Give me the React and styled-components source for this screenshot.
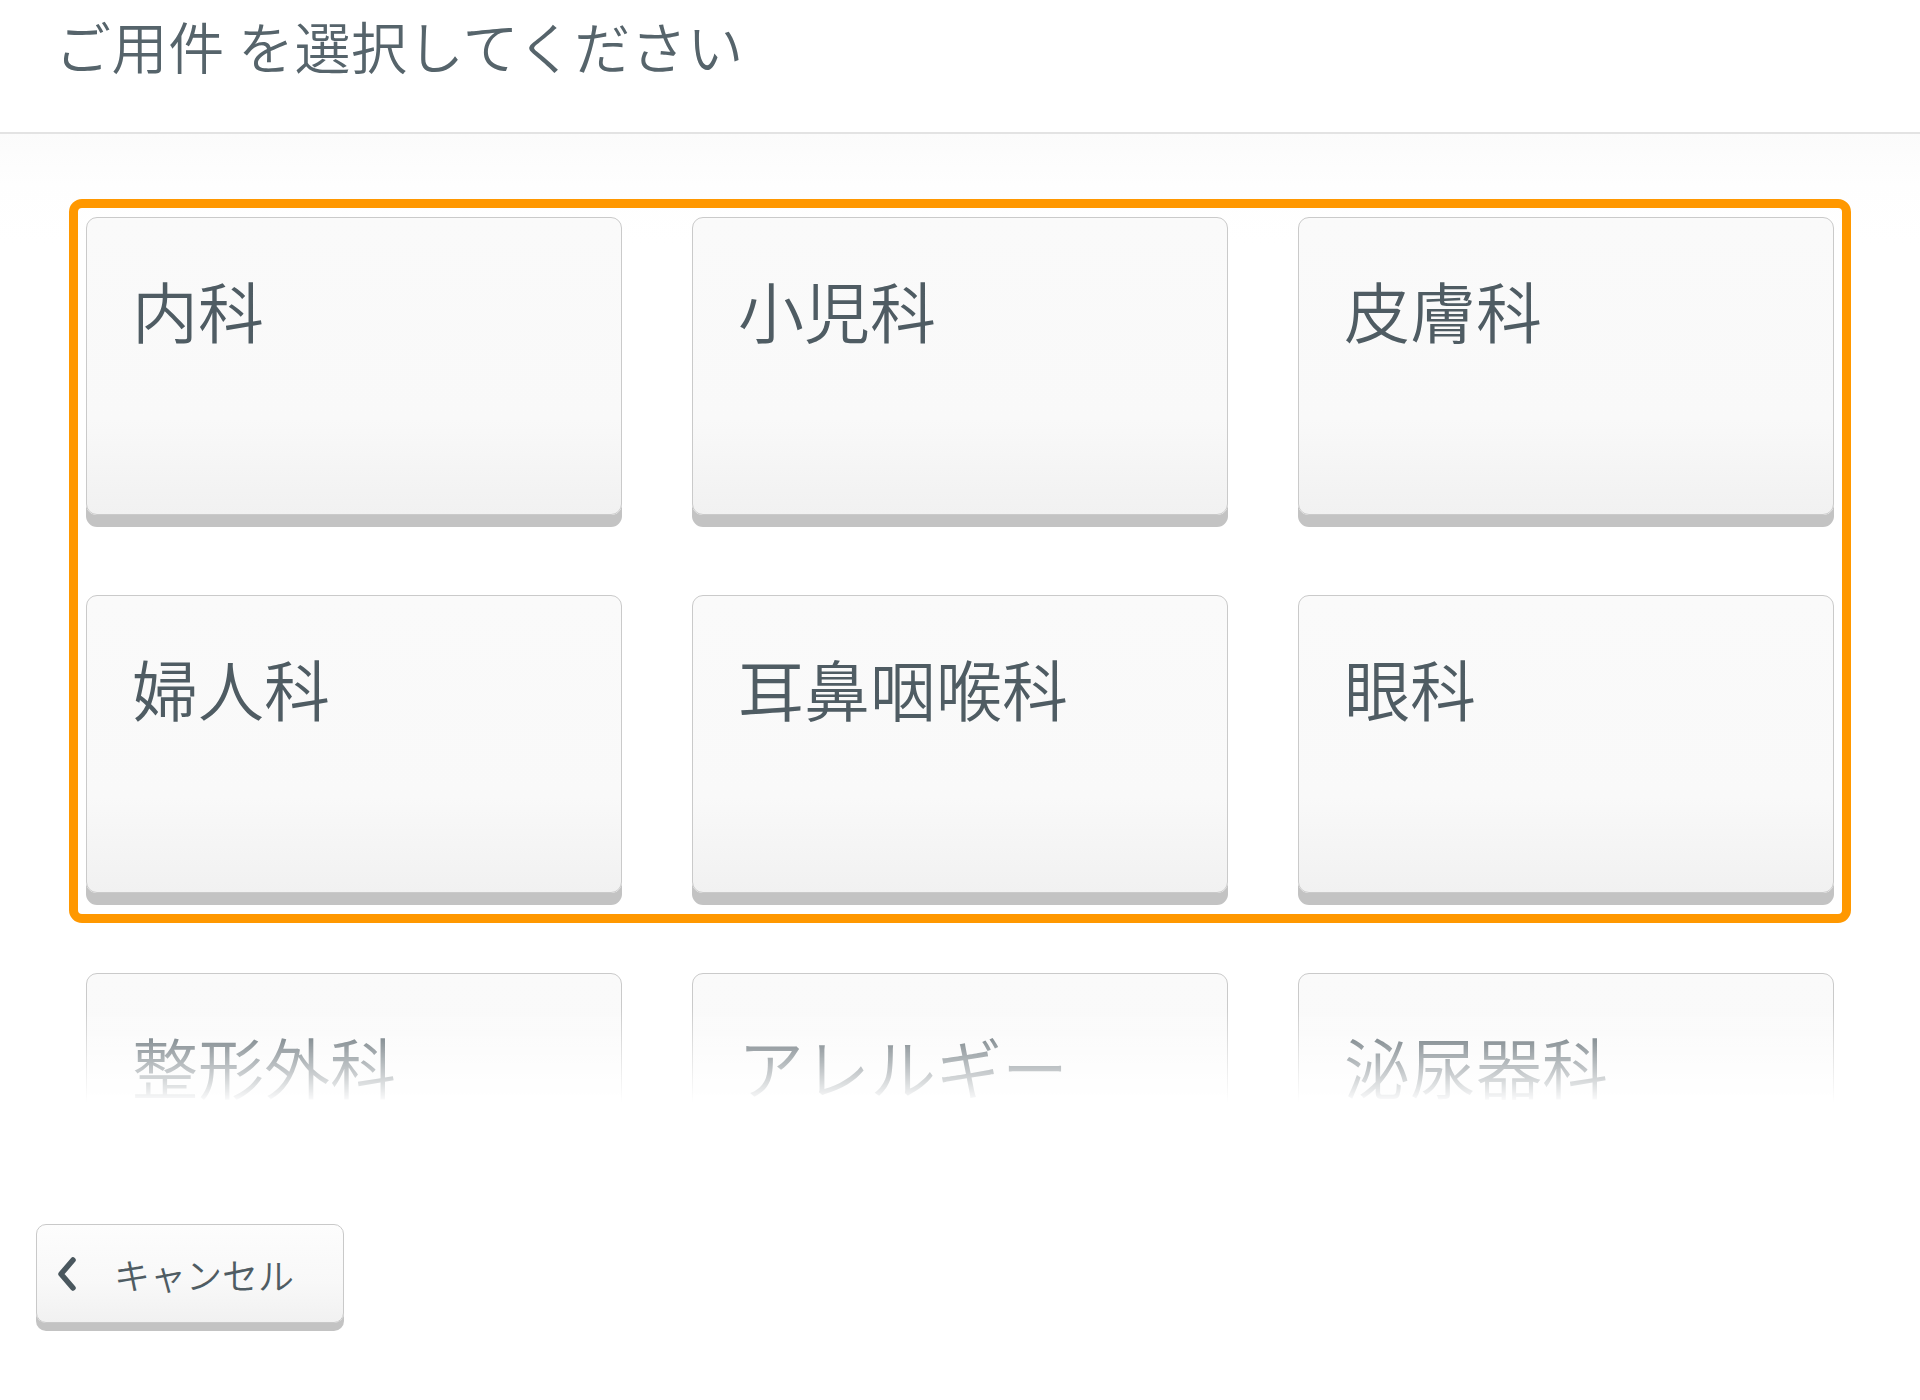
import React from "react";
import styled, { createGlobalStyle } from "styled-components";

const GlobalStyle = createGlobalStyle`
  html, body {
    margin: 0;
    padding: 0;
    background: #ffffff;
  }
  body {
    font-family: "Noto Sans CJK JP", "Noto Sans", sans-serif;
  }
  * { box-sizing: border-box; }
`;

const Page = styled.div`
  width: 1920px;
  min-height: 1400px;
  background: #ffffff;
  display: flex;
  flex-direction: column;
`;

const Header = styled.header`
  height: 134px;
  padding: 17px 0 0 55px;
  border-bottom: 2px solid #e3e3e3;
`;

const Title = styled.h1`
  margin: 0;
  font-size: 56px;
  line-height: 1;
  font-weight: 350;
  color: #56646b;
  letter-spacing: 0.6px;
`;

const ScrollArea = styled.div`
  height: 969px;
  overflow: hidden;
  padding: 83px 86px 0;
  background: linear-gradient(to bottom, #fbfbfb 0px, #fefefe 50px, #ffffff 110px);
  -webkit-mask-image: linear-gradient(to bottom, #000 0, #000 calc(100% - 96px), transparent 100%);
  mask-image: linear-gradient(to bottom, #000 0, #000 calc(100% - 96px), transparent 100%);
`;

const Grid = styled.div`
  position: relative;
  display: grid;
  grid-template-columns: repeat(3, 536px);
  grid-auto-rows: 298px;
  column-gap: 70px;
  row-gap: 80px;
`;

const Highlight = styled.div`
  position: absolute;
  top: -18px;
  left: -17px;
  right: -17px;
  height: 724px;
  border: 9px solid #ff9800;
  border-radius: 13px;
  pointer-events: none;
`;

const Card = styled.button`
  display: flex;
  align-items: flex-start;
  justify-content: flex-start;
  padding: 58px 0 0 45px;
  margin: 0;
  border: 1px solid #cacaca;
  border-radius: 11px;
  background: linear-gradient(to bottom, #fafafa 0%, #f9f9f9 68%, #f1f1f1 100%);
  box-shadow: 0 12px 0 #c3c3c3;
  font-family: inherit;
  text-align: left;
  cursor: pointer;
`;

const CardLabel = styled.span`
  font-size: 66px;
  line-height: 1;
  font-weight: 350;
  color: #4f5c63;
  white-space: nowrap;
`;

const Footer = styled.footer`
  padding: 121px 0 0 36px;
`;

const CancelButton = styled.button`
  display: flex;
  align-items: center;
  width: 308px;
  height: 99px;
  padding: 0 0 0 18px;
  margin: 0;
  border: 1px solid #c9c9c9;
  border-radius: 10px;
  background: linear-gradient(to bottom, #fdfdfd 0%, #f8f8f8 60%, #f1f1f1 100%);
  box-shadow: 0 8px 0 #c3c3c3;
  font-family: inherit;
  cursor: pointer;
`;

const Chevron = styled.svg`
  flex: none;
  width: 24px;
  height: 38px;
  margin-right: 35px;
`;

const CancelLabel = styled.span`
  font-size: 36px;
  line-height: 1;
  font-weight: 350;
  color: #4f5c63;
  white-space: nowrap;
`;

const departments = [
  "内科",
  "小児科",
  "皮膚科",
  "婦人科",
  "耳鼻咽喉科",
  "眼科",
  "整形外科",
  "アレルギー",
  "泌尿器科",
];

export default function App() {
  return (
    <>
      <GlobalStyle />
      <Page>
        <Header>
          <Title>ご用件 を選択してください</Title>
        </Header>
        <ScrollArea>
          <Grid>
            {departments.map((name) => (
              <Card key={name} type="button">
                <CardLabel>{name}</CardLabel>
              </Card>
            ))}
            <Highlight />
          </Grid>
        </ScrollArea>
        <Footer>
          <CancelButton type="button">
            <Chevron viewBox="0 0 24 38" aria-hidden="true">
              <polyline
                points="18,5 6,19 18,33"
                fill="none"
                stroke="#4a575e"
                strokeWidth="5.5"
                strokeLinecap="round"
                strokeLinejoin="round"
              />
            </Chevron>
            <CancelLabel>キャンセル</CancelLabel>
          </CancelButton>
        </Footer>
      </Page>
    </>
  );
}
